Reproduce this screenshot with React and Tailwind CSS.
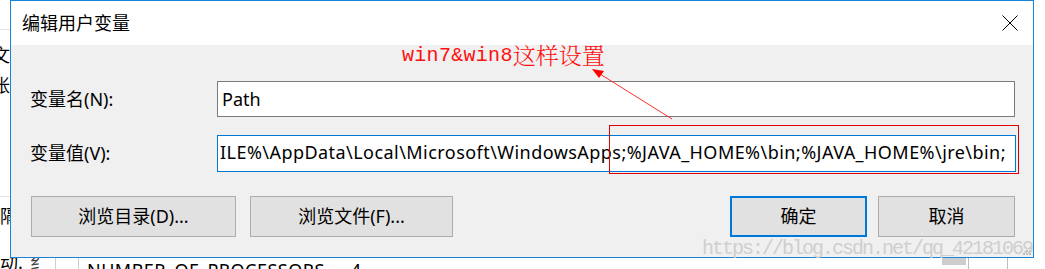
import React from "react";

const valueText = String.raw`ILE%\AppData\Local\Microsoft\WindowsApps;%JAVA_HOME%\bin;%JAVA_HOME%\jre\bin;`;

const uiFont = "font-['Noto_Sans','Noto_Sans_CJK_SC',sans-serif]";

const Button = ({ children, primary, className = "" }) => (
  <div
    className={`h-[41px] flex items-center justify-center bg-[#e1e1e1] text-[18px] text-black ${
      primary ? "border-2 border-[#0078d7]" : "border border-[#adadad]"
    } ${className}`}
  >
    {children}
  </div>
);

const CloseIcon = () => (
  <svg width="16" height="16" viewBox="0 0 16 16">
    <path d="M0.5 0.5 L15.5 15.5 M15.5 0.5 L0.5 15.5" stroke="#000" strokeWidth="1" />
  </svg>
);

const Grip = () => (
  <svg width="10" height="10" viewBox="0 0 10 10">
    <rect x="7" y="1" width="2" height="2" fill="#bdbdbd" />
    <rect x="4" y="4" width="2" height="2" fill="#bdbdbd" />
    <rect x="7" y="4" width="2" height="2" fill="#bdbdbd" />
    <rect x="1" y="7" width="2" height="2" fill="#bdbdbd" />
    <rect x="4" y="7" width="2" height="2" fill="#bdbdbd" />
    <rect x="7" y="7" width="2" height="2" fill="#bdbdbd" />
  </svg>
);

const App = () => {
  return (
    <div className={`relative w-[1045px] h-[269px] overflow-hidden bg-white flex flex-col ${uiFont}`}>
      <div className="flex h-[258px]">
        {/* window behind the dialog */}
        <div className="w-[10px] shrink-0 overflow-hidden flex flex-col text-[18px] text-black leading-none">
          <div className="h-[30px] border-b border-[#e3e3e3]" />
          <div className="mt-[16px] flex justify-end">
            <span className="shrink-0 w-[18px]">文</span>
          </div>
          <div className="mt-[12px] flex justify-end">
            <span className="shrink-0 w-[18px]">帐</span>
          </div>
          <div className="mt-[102px] border-b border-[#e3e3e3]" />
          <div className="mt-[10px] flex justify-start">
            <span className="shrink-0 w-[18px]">隔</span>
          </div>
        </div>

        {/* dialog */}
        <div className="relative w-[1024px] shrink-0 border border-[#1883d7] flex flex-col">
          <div className="h-[44px] bg-white flex items-center justify-between pl-[11px] pr-[15px]">
            <span className="text-[18px] text-black">编辑用户变量</span>
            <CloseIcon />
          </div>
          <div className="flex-1 bg-[#f0f0f0] pt-[36px] text-[18px] text-black">
            <div className="flex items-center h-[36px] pl-[19px]">
              <span className="w-[187px]">变量名(N):</span>
              <div className="w-[798px] h-[36px] border border-[#7a7a7a] bg-white flex items-center pl-[4px]">
                Path
              </div>
            </div>
            <div className="flex items-center h-[37px] mt-[18px] pl-[19px]">
              <span className="w-[187px]">变量值(V):</span>
              <div className="w-[799px] h-[37px] border border-[#0078d7] bg-white flex items-center pl-[2px] pb-[2px] overflow-hidden whitespace-nowrap">
                <span className="tracking-[0.45px]">{valueText}</span>
              </div>
            </div>
            <div className="flex items-center mt-[24px] pl-[20px] pr-[18px]">
              <Button className="w-[205px]">浏览目录(D)...</Button>
              <Button className="w-[203px] ml-[14px]">浏览文件(F)...</Button>
              <div className="flex-1" />
              <Button primary className="w-[137px]">确定</Button>
              <Button className="w-[137px] ml-[11px]">取消</Button>
            </div>
          </div>
          <div className="absolute right-[1px] bottom-[1px]">
            <Grip />
          </div>
        </div>
        <div className="flex-1 bg-white" />
      </div>

      {/* window behind, below the dialog */}
      <div className="flex h-[11px] items-start overflow-hidden text-[18px] text-black leading-none">
        <span className="w-[30px] -mt-[5px]">动.</span>
        <span className="w-[25px] -mt-[5px] text-[#444]">纟</span>
        <div className="w-[23px] h-full border-l border-[#cfcfcf]" />
        <div className="h-full border-l border-[#cfcfcf] pl-[8px] pt-[3px] tracking-[0.5px]">
          NUMBER_OF_PROCESSORS&nbsp;&nbsp;&nbsp;&nbsp;&nbsp;4
        </div>
        <div className="flex-1" />
        <div className="w-[24px] h-[7px] bg-[#cdcdcd]" />
        <div className="w-[2px]" />
        <div className="w-[39px] h-full border-l border-[#bdbdbd]" />
        <div className="w-[38px] h-full border-l border-[#bdbdbd]" />
      </div>

      {/* annotations laid over the screenshot */}
      <div className="absolute left-[402px] top-[43px] text-[#ff1010] flex items-end leading-none">
        <span className="font-['Liberation_Mono',monospace] text-[20px] tracking-[0.3px]">win7&amp;win8</span>
        <span className="font-['Noto_Serif_CJK_SC','Noto_Sans_CJK_SC',serif] text-[23px] font-light">这样设置</span>
      </div>
      <svg className="absolute left-0 top-0" width="1045" height="269">
        <line x1="672" y1="119" x2="600" y2="74" stroke="#ff3030" strokeWidth="1" />
        <polygon points="592,69 604,71 599,78" fill="#ff0000" />
      </svg>
      <div className="absolute left-[609px] top-[125px] w-[410px] h-[49px] border border-[#e00000]" />
      <div className="absolute left-[702px] top-[239px] font-['Liberation_Mono',monospace] text-[20px] tracking-[-2px] text-[#cfcfcf] leading-none">
        https://blog.csdn.net/qq_42181069
      </div>
    </div>
  );
};

export default App;
